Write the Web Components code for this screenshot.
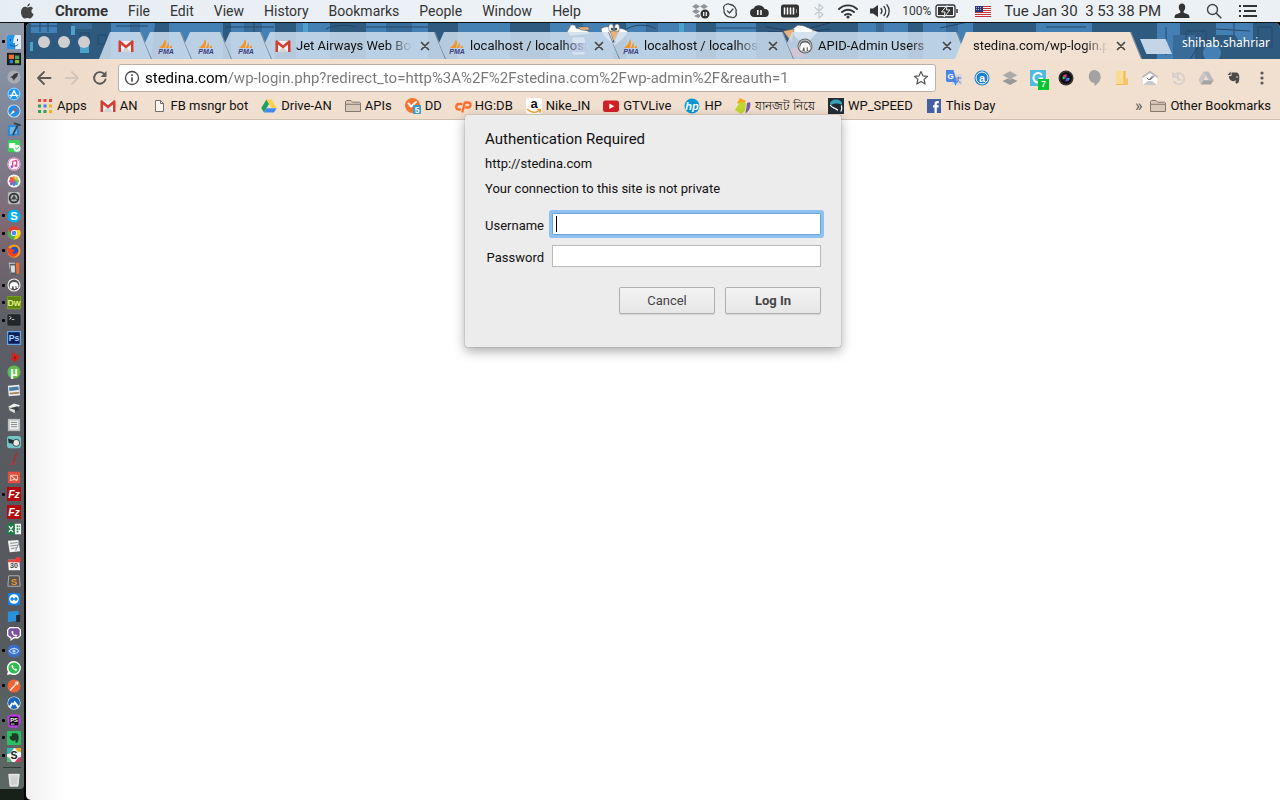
<!DOCTYPE html>
<html lang="en">
<head>
<meta charset="utf-8">
<title>stedina.com/wp-login.php</title>
<style>
  html, body { margin: 0; height: 100%; }
  body {
    font-family: Roboto, "Liberation Sans", sans-serif;
    font-size: 13px;
    line-height: 16px;
    color: #111;
    overflow: hidden;
  }
  [lang=bn] { font-size: 12px; }
</style>
</head>
<body>
<mac-desktop>
  <mac-menubar slot="menubar"></mac-menubar>
  <mac-dock slot="dock"></mac-dock>
  <browser-window>
    <browser-tab slot="tabs" pinned first icon="gmail"></browser-tab>
    <browser-tab slot="tabs" pinned icon="pma"></browser-tab>
    <browser-tab slot="tabs" pinned icon="pma"></browser-tab>
    <browser-tab slot="tabs" pinned icon="pma"></browser-tab>
    <browser-tab slot="tabs" icon="gmail">Jet Airways Web Booking</browser-tab>
    <browser-tab slot="tabs" icon="pma">localhost / localhost / db</browser-tab>
    <browser-tab slot="tabs" icon="pma">localhost / localhost / db</browser-tab>
    <browser-tab slot="tabs" icon="mamp">APID-Admin Users</browser-tab>
    <browser-tab slot="tabs" active>stedina.com/wp-login.php</browser-tab>
    <address-bar slot="toolbar"></address-bar>
    <bookmarks-bar slot="toolbar">
      <bookmark-item icon="apps">Apps</bookmark-item>
      <bookmark-item icon="gmail">AN</bookmark-item>
      <bookmark-item icon="page">FB msngr bot</bookmark-item>
      <bookmark-item icon="drive">Drive-AN</bookmark-item>
      <bookmark-item icon="folder">APIs</bookmark-item>
      <bookmark-item icon="dd">DD</bookmark-item>
      <bookmark-item icon="cpanel">HG:DB</bookmark-item>
      <bookmark-item icon="amazon">Nike_IN</bookmark-item>
      <bookmark-item icon="youtube">GTVLive</bookmark-item>
      <bookmark-item icon="hp">HP</bookmark-item>
      <bookmark-item icon="leaf" lang="bn">যানজট নিয়ে</bookmark-item>
      <bookmark-item icon="wpspeed">WP_SPEED</bookmark-item>
      <bookmark-item icon="facebook">This Day</bookmark-item>
      <bookmark-item slot="end" icon="folder">Other Bookmarks</bookmark-item>
    </bookmarks-bar>
    <auth-dialog>
      <span slot="title">Authentication Required</span>
      <span slot="origin">http://stedina.com</span>
      <span slot="message">Your connection to this site is not private</span>
    </auth-dialog>
  </browser-window>
</mac-desktop>

<script>
(function() {
  // Small builders for the icon set
  const box = (fill, inner = '') => `<rect x="1" y="1" width="14" height="14" rx="2" fill="${fill}"/>${inner}`;
  const disc = (fill, inner = '') => `<circle cx="8" cy="8" r="7.5" fill="${fill}"/>${inner}`;
  const line = (d, color = '#fff', width = 1.5) =>
    `<path d="${d}" fill="none" stroke="${color}" stroke-width="${width}" stroke-linecap="round" stroke-linejoin="round"/>`;
  const letters = (text, size, color, y = 12, extra = '') =>
    `<text x="8" y="${y}" font-size="${size}" font-weight="700" text-anchor="middle" fill="${color}" ${extra}>${text}</text>`;
  const phone = 'M5 5c0 3 3 6 6 6l.8-1.6-1.8-1-.8.8C8 8.800 7.200 8 6.800 6.800l.8-.8-1-1.800z';
  const evernoteHead = 'M5.500 2.500h5c2 .3 2.800 2 2.800 5 0 3-.6 6-2.300 6-2 0-2-2.500-.6-2.500-.6-1.200-2 .8-3.800 0C3.500 10.400 3 8 3 6h2.500z';

  // Every icon is drawn on a 16x16 grid unless it gives its own [width, markup]
  const ICONS = {
    // menu bar
    apple: '<path fill="#444" d="M11 .5c.1 1.500-1.300 3-2.700 3C8.100 2 9.500.7 11 .5zM8.300 4.500c.8 0 1.600-.8 3-.8 1.200 0 2.200.6 2.800 1.500-2.500 1.500-2.100 4.800.5 5.800-.6 1.700-2 4.500-3.600 4.500-1 0-1.500-.6-2.700-.6s-1.700.6-2.600.6C3.800 15.500 2 12 2 9c0-3.200 2-5.200 4-5.200 1.100 0 1.700.7 2.300.7z"/>',
    dropbox: [20, '<g fill="#8f9399"><path d="M5 1l4 2.500L5 6 1 3.500zM13 1l4 2.500L13 6 9 3.500zM5 6l4 2.500L5 11 1 8.500zM5 12l2-1.200 2 1.200v2l-2 1-4-2z"/></g><circle cx="14" cy="11" r="4.500" fill="#333"/><path d="M12.700 9v4M15.300 9v4" stroke="#fff" stroke-width="1.200"/>'],
    skypecheck: line('M4 1.500a3.500 3.500 0 0 1 4 0A6.500 6.500 0 0 1 14 9.500a3.500 3.500 0 0 1-5 4.500A6.500 6.500 0 0 1 2 6.500 3.500 3.500 0 0 1 4 1.500zM5.500 8l2 2 3.500-4', '#444', 1.300),
    cloud: [20, '<path fill="#333" d="M5 14a4.300 4.300 0 0 1-.5-8.500A6 6 0 0 1 15.500 6 4 4 0 0 1 16 14z"/><path d="M8.800 7v5M12 7v5" stroke="#fff" stroke-width="1.500"/>'],
    keybattery: [20, '<rect x="1" y="1.500" width="18" height="13" rx="2.500" fill="#333"/><path d="M4.500 4.500v7M7.500 4.500v7M10.500 4.500v7M13.500 4.500v7" stroke="#fff" stroke-width="1.500"/><path d="M16.500 6v4" stroke="#999"/>'],
    bluetooth: line('M4 4.500l8 7-4 3.500V1l4 3.500-8 7', '#c3c8cd', 1.100),
    wifi: [20, line('M1 6a13 13 0 0 1 18 0M4 9a9 9 0 0 1 12 0M7 12a5 5 0 0 1 6 0', '#333', 1.900) + '<circle cx="10" cy="14" r="1.500" fill="#333"/>'],
    volume: [22, '<path fill="#333" d="M1 5.500h3L9 2v12L4 10.500H1z"/>' + line('M12 5.500a4 4 0 0 1 0 5M15 3.500a7 7 0 0 1 0 9M18 1.800a10 10 0 0 1 0 12.400', '#333', 1.300)],
    battery: [24, '<rect x="1" y="2" width="19" height="12" rx="2" fill="none" stroke="#333" stroke-width="1.300"/><rect x="3" y="4" width="15" height="8" fill="#333"/><path d="M12 2.500L6.500 9h3.500l-1 5 6-7h-3.500z" fill="#333" stroke="#eef2f5"/><path d="M22 6v4" stroke="#333" stroke-width="1.500"/>'],
    flag: '<rect y="3" width="16" height="11" fill="#f5f5f5"/><path d="M0 3.500h16M0 5.500h16M0 7.500h16M0 9.500h16M0 11.500h16M0 13.500h16" stroke="#c8323c"/><rect y="3" width="8" height="6" fill="#2e3a78"/><path d="M1 4.500h6M1 6.500h6" stroke="#fff" stroke-width=".6" stroke-dasharray="1 1"/>',
    person: '<path fill="#333" d="M8 .5c2.300 0 3.300 1.800 3.200 3.800 0 1.700-.7 3-1.500 3.800v1.700l4 1.500c1.300.5 1.800 1.700 1.800 3.700H.5c0-2 .5-3.200 1.800-3.700l4-1.500V8.100C5.500 7.300 4.800 6 4.800 4.300 4.700 2.300 5.700.5 8 .5z"/>',
    search: '<circle cx="6.500" cy="6.500" r="5" fill="none" stroke="#444" stroke-width="1.400"/>' + line('M10.300 10.300l4.500 4.500', '#444', 1.600),
    list: [20, '<path d="M5 3h14M6 8h12M5 13h14" stroke="#333" stroke-width="1.800"/><path d="M1 3h2M1 8h2M1 13h2" stroke="#333" stroke-width="1.800"/>'],

    // page and bookmark icons
    gmail: '<path fill="#f3f3f3" d="M1 3h14v11H1z"/><path fill="#d5d5d5" d="M3 14l5-5 5 5z"/><path fill="#d63c30" d="M.5 3.500C.5 2.500 1.800 2 2.600 2.700L8 7.300l5.400-4.600c.8-.7 2.100-.2 2.100.8V14H13V6.500L8 10.500 3 6.500V14H.5z"/>',
    pma: '<path fill="#f7931e" d="M7 1c1.500 3 1.300 6-.3 9H1C4 8 6 5 7 1zM10 4c1.200 2 1.200 4 .3 6H7.500C9 8 10 6.500 10 4zM13 7c.8 1 1 2 1 3h-3c1-.8 1.700-1.800 2-3z"/>' + letters('PMA', 7, '#3f3f83', 15.500, 'font-style="italic"'),
    mamp: disc('#666', '<circle cx="8" cy="8" r="6" fill="none" stroke="#fff" stroke-width=".7"/><path fill="#fff" d="M3.500 12.500c-.8-4 0-8 4.500-8 4.800 0 5.500 4 4.800 7.500H11l-.3-3-1 .3V13H7.800L7.500 9.800 6 9.500l-.3 3z"/>'),
    apps: '<path fill="#e8453c" d="M1 1h3v3H1zM6.500 1h3v3h-3zM12 1h3v3h-3z"/><path fill="#30a05a" d="M1 6.500h3v3H1zM1 12h3v3H1zM6.500 12h3v3h-3z"/><path fill="#3f83f1" d="M6.500 6.500h3v3h-3z"/><path fill="#f5b400" d="M12 6.500h3v3h-3zM12 12h3v3h-3z"/>',
    page: '<path d="M4.500 2.500h5l3 3v8h-8z" fill="#fff5ec" stroke="#707070"/><path d="M9.500 2.500v3h3" fill="none" stroke="#707070"/>',
    drive: '<path fill="#1ea362" d="M5.500 1.500L8 6 3 14.500.2 10z"/><path fill="#ffcf48" d="M5.500 1.500h5l5.200 8.700h-5z"/><path fill="#4587f4" d="M5.500 10.200h10.200L13 14.500H3z"/>',
    folder: '<path d="M.5 13.500v-10l1-1h4.500l1.500 1.700h7l1 .8v8.500z" fill="#d8c9ba" stroke="#85786d"/><path d="M.5 6.300h15" stroke="#85786d"/>',
    dd: '<circle cx="7.500" cy="7.500" r="7.500" fill="#f4722b"/>' + line('M3.500 5.500l2.500 3 5-4.500', '#fff', 2) + '<rect x="8" y="7" width="8" height="9" rx="1" fill="#3b9ac9"/><text x="12" y="14.500" font-size="8.500" font-weight="700" text-anchor="middle" fill="#fff">5</text>',
    cpanel: line('M6.500 6H4a2.700 2.700 0 0 0 0 5.500h1M7.500 13.500L9.800 4.500H13a2.500 2.500 0 0 1 0 5h-2', '#ff6c2c', 2.300),
    amazon: '<rect width="16" height="16" rx="2" fill="#fff"/>' + letters('a', 13, '#111', 10) + line('M1.500 11.500c4 3.500 9 3.500 12.500.5M12 11.500l2.500.2-.5 2.500', '#f59b1c', 1.500),
    youtube: '<rect y="2.500" width="16" height="11.500" rx="2.500" fill="#cf2026"/><path fill="#fff" d="M6.300 5.500v5.500l5-2.700z"/>',
    hp: disc('#0b96d6') + letters('hp', 11, '#fff', 11.500, 'font-style="italic"'),
    leaf: '<path fill="#fba51a" d="M2 5L5 0l6 3-4 4z"/><path fill="#bfd730" d="M0 12L5 4l6 1-1 8-4 3z"/><path fill="#7a5ba8" d="M12 5l3-1c1 4 0 8-4.500 11.500z"/>',
    wpspeed: '<rect width="16" height="16" fill="#222d33"/><ellipse cx="8" cy="5.500" rx="6" ry="4" fill="#35a0b8"/><path fill="#222d33" d="M3 7c3-2 8-2 11 0v4H5z"/>' + line('M2.500 7.500c2 3 5 2 7 4.500M13 13c1-2 1-3 .5-5', '#fff', 1.300),
    facebook: '<rect x="1" y="1" width="14" height="14" fill="#4460a0"/><path fill="#fff" d="M8.500 15V9.500H7V7.300h1.500V6c0-2 1-3 2.800-3h1.500v2.200h-1c-.8 0-1 .4-1 1v1.100h2l-.3 2.200h-1.700V15z"/>',

    // toolbar
    back: line('M14.500 8H2M8 2L2 8l6 6', '#5a5a5a', 1.800),
    forward: line('M1.500 8H14M8 2l6 6-6 6', '#d3c6ba', 1.800),
    reload: line('M13.500 9.500A5.800 5.800 0 1 1 12 3.800', '#5a5a5a', 1.900) + '<path fill="#5a5a5a" d="M14.500 1v6h-6z"/>',
    info: '<circle cx="8" cy="8" r="6.500" fill="none" stroke="#444" stroke-width="1.300"/><path d="M8 7.300v4.400M8 4.300v1.600" stroke="#444" stroke-width="1.600"/>',
    star: line('M8 1.500l1.900 4.300 4.700.5-3.500 3.100 1 4.600L8 11.600 3.900 14l1-4.600L1.400 6.300l4.700-.5z', '#555', 1.200),
    translate: '<rect x="6" y="4" width="10" height="11" rx="1" fill="#d5d8de"/>' + line('M10 8h5M12.500 7v1c0 2-1 4-2 5M11 9.500l3.500 3.500', '#6c83a8', 1) + '<path fill="#4a86e8" d="M0 0h7.500L11 12l-1.500 4L8 12H1.500L0 11z"/><text x="4.700" y="9" font-size="8" font-weight="700" text-anchor="middle" fill="#fff">G</text>',
    alexa: disc('#1b7fd0', '<circle cx="8" cy="8" r="6" fill="none" stroke="#fff"/>') + letters('a', 11, '#fff', 11.500),
    buffer: '<path fill="#999" d="M8 7.500l7.500 3.500L8 15 .5 11z"/><path fill="#aaa" d="M8 1l7.500 4.200L8 9.500.5 5.200z" stroke="#f0e0d2" stroke-width=".4"/>',
    grammar: '<rect width="16" height="16" fill="#50bbdc"/>' + line('M11.500 4.500A4.700 4.700 0 1 0 12 10.500V8.500H9.500', '#fff', 2),
    camera: disc('#333', '<circle cx="8" cy="8" r="5.800" fill="#0c0c0c"/><circle cx="8" cy="8" r="3.500" fill="#24113d"/><path fill="#d33c72" d="M8 8L4.700 6A4 4 0 0 1 9 4.500z"/><path fill="#28c76b" d="M8 8l-3.500 1.500.2-3.500z"/><path fill="#24aadd" d="M8 8h3.800l-1 3z"/><path fill="#7b52cb" d="M8 8l2.500 3-3 .5z"/>'),
    hangouts: '<path fill="#a2a2a2" d="M8 0a6.700 6.700 0 0 1 6.700 6.700c0 4-3.200 7.300-6.200 9.300v-3A6.600 6.600 0 0 1 8 0z"/>',
    notes: '<path fill="#f0b95a" d="M2 1h9.500v14H2z"/><path fill="#f9dc93" d="M2 1h7.500v13H2z"/><path fill="#f3c469" d="M10 8.500h4V15h-4z"/>',
    mail: '<path fill="#fff" d="M1 6l7-5 7 5v9H1z"/><path fill="#b5b5b5" d="M.5 6L8 .8 15.500 6v2L8 3 .5 8z"/><path d="M1 15l5-4h4l5 4" fill="#c9c9c9"/>' + line('M5 8l2 2 3.500-4M8.500 9.500L12 6.500', '#666', 1),
    history: line('M3 3v4h4M3.500 7A5.500 5.500 0 1 1 4 11.500M8 5.500V9l2.500 1', '#d8d0cb', 2),
    drivegray: '<path fill="#c9c5c3" d="M5.500 1.500L8 6 3 14.500.2 10z"/><path fill="#bbb" d="M5.500 1.500h5l5.200 8.700h-5z"/><path fill="#a4a4a4" d="M5.500 10.200h10.200L13 14.500H3z"/>',
    evernote: `<path fill="#4a4a4a" d="${evernoteHead}"/><path fill="#4a4a4a" d="M1.500 5L4.700 1.500V5z"/><circle cx="11" cy="7" r=".8" fill="#eee"/>`,
    dots: '<g fill="#5a5a5a"><circle cx="8" cy="3" r="1.600"/><circle cx="8" cy="8" r="1.600"/><circle cx="8" cy="13" r="1.600"/></g>',
    close: line('M4.500 4.500l7 7M11.500 4.500l-7 7', '#444', 1.700),

    // dock
    finder: '<rect width="16" height="16" rx="1" fill="#e5eef6"/><path fill="#2196f0" d="M1 0h8c-1 3-2 6-2 9h2l.5 7H1a1 1 0 0 1-1-1V1z"/>' + line('M4 5v1.500M12 5v1.500M3.500 11c3 2.500 6.500 2.500 9 0', '#1b4d7f', 1.100),
    mission: '<rect y="1" width="16" height="14" fill="#171c1f"/><path fill="#eb6f35" d="M2 3h6v5H2z"/><path fill="#4aa564" d="M9 4h5v4H9z"/><path fill="#3779d0" d="M3 9h4v4H3z"/><path fill="#8bbd3c" d="M9 9h5v4H9z"/>',
    launchpad: disc('#a9adb3', '<path fill="#363a40" d="M12.500 3.500c-3 0-5 1-6.500 3.500L3.500 8l2 .8 1.500 1.700.8 2L9 10c2.500-1.500 3.500-3.500 3.500-6.500z"/>'),
    appstore: disc('#1d97f2') + '<circle cx="8" cy="8" r="6.800" fill="none" stroke="#bfe3ff"/>' + line('M8 4l-3.500 7.500M8 4l3.500 7.500M3.500 9.500h9', '#fff', 1.500),
    safari: disc('#e3eaf0', '<circle cx="8" cy="8" r="6.500" fill="#1f8ee6"/><path fill="#ef4b3e" d="M13 3L9 9 7 7z"/><path fill="#fff" d="M3 13l4-6 2 2z"/>'),
    xcode: '<path fill="#2a89d9" d="M1 4l12-1 1 12-13 1z"/><path fill="#6cb9f0" d="M3 6l8-.5.5 8-8 .5z"/>' + line('M12.500 3L7 14M8.500 1.500l6.500 2', '#34404c', 2),
    facetime: box('#3bd15a', '<rect x="2.500" y="4.500" width="7" height="6" rx="1" fill="#fff"/><circle cx="11.500" cy="10.500" r="4" fill="#f3fff4"/>' + line('M10 10l1 2 2.500-3', '#3bd15a', 1)),
    itunes: disc('#fafafa', '<circle cx="8" cy="8" r="6.800" fill="none" stroke="#ea5fae"/>' + line('M6.500 11V5l4.500-1v6', '#e04c8d', 1.500) + '<circle cx="5.500" cy="11" r="1.500" fill="#9d5be8"/><circle cx="10" cy="10" r="1.500" fill="#e04c8d"/>'),
    photos: disc('#f7f7f7', '<g stroke-width="3.500" stroke-linecap="round" fill="none"><path d="M8 7V4" stroke="#f5a623"/><path d="M9 7l2-2" stroke="#d9d13e"/><path d="M9 8h3" stroke="#7cc142"/><path d="M9 9l2 2" stroke="#3fb8a8"/><path d="M8 9v3" stroke="#4b87d0"/><path d="M7 9l-2 2" stroke="#9160bd"/><path d="M7 8H4" stroke="#d94f82"/><path d="M7 7L5 5" stroke="#ee5a3a"/></g>'),
    prefs: box('#b4b7ba', '<circle cx="8" cy="8" r="5" fill="none" stroke="#333" stroke-width="2"/><circle cx="8" cy="8" r="2" fill="#444"/><path d="M8 3v4M4 10l3-1.500M12 10L9 8.500" stroke="#333"/>'),
    skype: disc('#00aff0') + letters('S', 13, '#fff', 12.500),
    chrome: disc('#4caf50', '<path fill="#e33b2e" d="M1.500 4.200A7.500 7.500 0 0 1 14.700 4.500H8L5 9z"/><path fill="#fcd20b" d="M14.700 4.500A7.500 7.500 0 0 1 7.500 15.500L11.200 9 9 4.500z"/><circle cx="8" cy="8" r="3.500" fill="#fff"/><circle cx="8" cy="8" r="2.700" fill="#4285f4"/>'),
    firefox: disc('#ff9a16', '<circle cx="8.500" cy="7.500" r="4.500" fill="#2050c8"/><path fill="#f2411f" d="M1 4c2 1 4 1 5 2l3 1c-1 2-3 2-3 3 2 2 5 1 7-2 0 5-4 7-7 6.500C2 14 0 9 1 4z"/>'),
    calculator: '<path fill="#d6d6d6" d="M2 2h7v12l-5 1z"/><path fill="#5a5d61" d="M3 3h7l1 13H4z"/><path fill="#f36d2b" d="M10 2h4l0 12-3 1z"/><path fill="#ddd" d="M4 5h5v8H5z"/>',
    mampdock: disc('#f3f3f3', '<circle cx="8" cy="8" r="6.200" fill="#555"/><path fill="#fff" d="M3.500 12c-.8-4 0-7.500 4.500-7.500 4.800 0 5.500 4 4.800 7H11l-.3-2.500-1 .2V12.500H7.800L7.500 9.300 6 9l-.3 3z"/>'),
    dreamweaver: '<rect width="16" height="15" rx="1" fill="#7aa31b"/><rect x="1" y="1" width="14" height="13" fill="#3f5a0c" opacity=".45"/>' + letters('Dw', 10, '#e1f47c', 11.500),
    terminal: '<rect y="1" width="16" height="14" rx="2" fill="#22262a" stroke="#777" stroke-width=".7"/>' + line('M3 4l2 1.500L3 7M6 7.500h2', '#ddd', 1),
    photoshop: '<rect x=".7" y=".7" width="14.600" height="14.600" fill="#0b1d5b" stroke="#62a8e8" stroke-width="1.400"/>' + letters('Ps', 10, '#a7d8fb', 11.500),
    adobered: '<path fill="#d92019" d="M5 1c2 3 1 5 3 7l1-3c2 1 2 3 2 4l4-1c-1 3-2 3-3 6l-3 2c-2-2-4-4-5-3 1-2 2-2 2-4z"/><path fill="#701511" d="M8 9l2 1-1 5z"/>',
    utorrent: disc('#5ebf4d') + letters('µ', 15, '#fff', 12),
    preview: '<path fill="#e8edf0" d="M1 3l13-1 1 12-13 1z"/><path fill="#4b7ba5" d="M2 5l11-1 .5 4L3 9z"/><path fill="#a98558" d="M3 11l11-1 .5 2-11 1z"/>',
    graduate: '<path fill="#eee" d="M1 8l7-4 7 2-6 5z"/><path fill="#3e4043" d="M4 9l8-2 2 4-6 3-4-2z"/><path fill="#ddd" d="M2 9l7 2v4l-6-3z"/>',
    textbox: '<rect x="1" y="1" width="14" height="14" fill="#bdbfc1"/><rect x="3" y="3" width="10" height="10" fill="#f0f0f0"/><path d="M4.500 5h7M4.500 7.500h7M4.500 10h7" stroke="#777"/>',
    pencilface: '<rect y="1" width="16" height="14" rx="3" fill="#6fc6c3"/><circle cx="10.500" cy="9" r="4" fill="#e9e9e9" stroke="#333"/><path fill="#263033" d="M1 4l7 2-1 4-5-1z"/>',
    brush: line('M11 1.500L7 12', '#a4302f', 2) + line('M7 11l-3 3.500L11 13', '#b73936', 1),
    redcard: '<rect x="1" y="2" width="14" height="13" rx="1" fill="#e2513f"/>' + line('M4 6h8v5H7l-3 1zM4 6l7 6', '#ffc3b8', 1.200),
    filezilla: '<rect width="16" height="16" fill="#b30b0b"/>' + letters('Fz', 12, '#fff', 12.500, 'font-style="italic"'),
    excel: '<path fill="#fff" d="M8 2h8v12H8z"/><path fill="#1e7b45" d="M0 2l9-1.500v15L0 14zM11 4h2v2h-2zM14 4h1v2h-1zM11 7h2v2h-2zM14 7h1v2h-1zM11 10h2v2h-2z"/>' + line('M2.500 5l4 6M6.500 5l-4 6', '#fff', 1.400),
    textedit: '<path fill="#f1f1f1" d="M1 2l12-1 2 13-12 1z"/>' + line('M4 5l8-1M4 8l8-1M5 11l6-1M14 4l-4 9', '#7f858c', 1),
    calendar: '<path fill="#f4f4f4" d="M1 3l13 0 1 12H2z"/><path fill="#d94a41" d="M1 3h13v3H1z"/>' + letters('30', 8, '#444', 13) + '<circle cx="12.500" cy="3" r="3" fill="#f33"/>',
    sublime: '<path fill="#555" stroke="#b9b9b9" d="M2 2h12l1 12H1z"/>' + letters('S', 11, '#f49325', 12),
    teamviewer: box('#1482e6', '<circle cx="8" cy="8" r="5.500" fill="#fff"/>' + line('M4.500 8h7M6 6.500L4.500 8 6 9.500M10 6.500L11.500 8 10 9.500', '#1482e6', 1.500)),
    simulator: '<path fill="#2a91dc" d="M1 3l12-1 1 11-13 2z"/><path fill="#22292f" d="M10.500 7l4.500-.5v8l-4.500.5z"/>',
    viber: '<path fill="#fff" d="M3 0h10l3 3v7l-3 3H8l-4 3v-3l-4-3V3z"/><path fill="#7d51a0" d="M3.500 1.500h9l2 2v6l-2 2h-5l-2.500 2v-2l-3.500-2v-6z"/>' + `<path fill="#fff" d="${phone}"/>`,
    eye: disc('#3a6fc9') + line('M2.500 8C5 4 11 4 13.500 8 11 12 5 12 2.500 8z', '#b9d2ff', 1.200) + '<circle cx="8" cy="8" r="1.800" fill="#b9d2ff"/>',
    whatsapp: '<path fill="#fff" d="M8 0a8 8 0 1 1-4 15L0 16l1-4A8 8 0 0 1 8 0z"/><circle cx="8" cy="8" r="6.400" fill="#2bc04b"/>' + `<path fill="#fff" d="${phone}"/>`,
    postman: disc('#ef6436') + line('M4 12.500L11 5M10 4l2.500-.5L12 6', '#fbe5dd', 1.600),
    nordvpn: disc('#f4f7fb', '<circle cx="8" cy="8" r="6.800" fill="#1766c0"/><path fill="#fff" d="M2 12l3.500-5 1.500 1.500L8.500 5 14 12l-2 2-3-5-1 2-1.500-1.500L4 14z"/>'),
    phpstorm: '<path fill="#bc3ee0" d="M0 3l6-3 9 1 1 9-5 6-9-1z"/><rect x="3" y="3" width="10" height="10" fill="#111"/>' + letters('PS', 6.500, '#fff', 9.500) + '<path d="M4.500 11.500h4" stroke="#fff"/>',
    evernotegreen: `<rect width="16" height="16" rx="1" fill="#2dbe60"/><path fill="#1e3c29" d="${evernoteHead}"/>`,
    slack: '<rect width="16" height="16" rx="1" fill="#f7f7f7"/><path fill="#36b5ae" d="M0 0h8L4 6 0 7z"/><path fill="#e6a92f" d="M9 0h7v5l-4-1z"/><path fill="#d8375f" d="M16 10v6H9l4-5z"/><path fill="#5fb784" d="M0 10l3 1 3 5H0z"/>' + letters('S', 12, '#222', 12),
    trash: '<path fill="#d9dbdb" stroke="#f5f5f5" d="M2 1.500h12L12.500 15h-9z"/><path d="M5.500 4l.5 9M8 4v9M10.500 4l-.5 9" stroke="#bcc1c1"/>'
  };

  // Shared setup: open a shadow root and stamp the markup in it
  class UiElement extends HTMLElement {
    constructor() {
      super();
      this.attachShadow({ mode: 'open' });
    }
    stamp(html) {
      const template = document.createElement('template');
      template.innerHTML = html;
      this.shadowRoot.replaceChildren(template.content.cloneNode(true));
    }
  }

  class UiIcon extends UiElement {
    connectedCallback() {
      const icon = ICONS[this.getAttribute('name')] || '';
      const [width, markup] = Array.isArray(icon) ? icon : [16, icon];
      this.stamp(`
        <style>
          :host { display: block; flex: none; height: var(--icon-size, 16px); }
          svg { display: block; height: 100%; width: auto; overflow: visible; font-family: "Liberation Sans", sans-serif; }
        </style>
        <svg viewBox="0 0 ${width} 16" aria-hidden="true">${markup}</svg>`);
    }
  }

  class MacDesktop extends UiElement {
    connectedCallback() {
      this.stamp(`
        <style>
          :host {
            display: flex;
            flex-direction: column;
            height: 100vh;
            background: linear-gradient(90deg, transparent 24px, #050505 24px), linear-gradient(#8d9cab, #8d9cab 5%, #172019 90%);
          }
          main { display: flex; flex: 1; min-height: 0; border-top: 1px solid #111; }
          main ::slotted(browser-window) { flex: 1; min-width: 0; }
        </style>
        <slot name="menubar"></slot>
        <main><slot name="dock"></slot><slot></slot></main>`);
    }
  }

  class MacMenubar extends UiElement {
    connectedCallback() {
      const menus = ['File', 'Edit', 'View', 'History', 'Bookmarks', 'People', 'Window', 'Help'];
      const icons = names => names.map(name => `<ui-icon name="${name}"></ui-icon>`).join('');
      this.stamp(`
        <style>
          :host {
            display: flex;
            align-items: center;
            justify-content: space-between;
            height: 22px;
            padding: 0 22px 0 19px;
            background: linear-gradient(90deg, #e6edf4, #f0f4f7 60%, #ebf0f5);
            color: #333;
            font-size: 14px;
          }
          nav, div, span { display: flex; align-items: center; }
          nav { gap: 20px; }
          .status { gap: 11px; }
          .controls { gap: 16px; }
          span { gap: 4px; padding-right: 5px; font-size: 12px; }
          button { border: 0; padding: 0; background: none; color: inherit; font: inherit; }
          .app { font-weight: 700; font-size: 15px; }
          time { white-space: pre; padding: 0 2px; font-size: 15px; }
        </style>
        <nav>
          <ui-icon name="apple"></ui-icon>
          <button type="button" class="app">Chrome</button>
          ${menus.map(name => `<button type="button">${name}</button>`).join('')}
        </nav>
        <div class="status">
          ${icons(['dropbox', 'skypecheck', 'cloud', 'keybattery', 'bluetooth', 'wifi', 'volume'])}
          <span>100%<ui-icon name="battery"></ui-icon></span>
          <ui-icon name="flag"></ui-icon>
          <time>Tue Jan 30  3 53 38 PM</time>
          <div class="controls">${icons(['person', 'search', 'list'])}</div>
        </div>`);
    }
  }

  class MacDock extends UiElement {
    connectedCallback() {
      // A trailing dot marks an application that is running
      const apps = ('finder. mission launchpad appstore safari xcode facetime itunes photos prefs skype. chrome. ' +
        'firefox. calculator mampdock. dreamweaver. terminal. photoshop adobered utorrent preview graduate textbox ' +
        'pencilface brush redcard filezilla. filezilla excel textedit calendar sublime teamviewer simulator viber ' +
        'eye. whatsapp postman. nordvpn phpstorm. evernotegreen. slack.').split(' ');
      const item = app => `
        <li class="${app.endsWith('.') ? 'running' : ''}"><ui-icon name="${app.replace('.', '')}"></ui-icon></li>`;
      this.stamp(`
        <style>
          :host {
            --icon-size: 14px;
            display: flex;
            flex-direction: column;
            flex: none;
            width: 24px;
            margin: 9px 2px 11px 0;
            box-sizing: border-box;
            padding-top: 1px;
            border-radius: 0 4px 4px 0;
            background: linear-gradient(#8f99aa, #7d8596 12%, #7d6872 26%, #5d5f68 38%, #55575d 75%, #5c6864);
          }
          ul { display: flex; flex-direction: column; flex: 1; margin: 0; padding: 0; list-style: none; }
          li { display: flex; flex: 1; align-items: center; gap: 2px; padding-left: 2px; }
          li::before { content: ""; width: 3px; height: 3px; border-radius: 1px; }
          .running::before { background: #050505; }
          .rule { flex: none; width: 18px; height: 1px; margin: 3px; padding: 0; background: #333a3a; }
          .rule::before { content: none; }
          .trash { flex: none; height: 18px; }
        </style>
        <ul>
          ${apps.map(item).join('')}
          <li class="rule" role="separator"></li>
          <li class="trash"><ui-icon name="trash"></ui-icon></li>
        </ul>`);
    }
  }

  class BrowserWindow extends UiElement {
    connectedCallback() {
      this.stamp(`
        <style>
          :host {
            display: flex;
            flex-direction: column;
            border-radius: 5px 5px 0 5px;
            overflow: hidden;
            background: linear-gradient(90deg, #f0f0f0, #fff 40px);
          }
          header { position: relative; display: flex; height: 36px; background: #2f5a80; }
          .theme { position: absolute; width: 100%; height: 100%; }
          .lights { display: flex; gap: 8px; padding: 13px 9px 0 12px; position: relative; }
          .lights button { width: 12px; height: 12px; padding: 0; border: 0; border-radius: 50%; background: #cfcfcf; }
          .tabs { display: flex; flex: 1; align-items: flex-end; min-width: 0; position: relative; }
          .new-tab {
            flex: none;
            width: 32px; height: 15px; margin: 0 0 5px -2px; padding: 0; border: 0;
            background: #c4d6e6;
            clip-path: polygon(0 0, 80% 0, 100% 100%, 20% 100%);
          }
          .user { position: relative; padding: 12px 10px 0 0; color: #fff; font: 12px/16px "Noto Sans", sans-serif; }
          .toolbar {
            background: linear-gradient(90deg, #ecd9c8, #f1dfcf 8%);
            border-bottom: 1px solid #cfbfb1;
          }
          main { position: relative; flex: 1; }
          /* the dialog sheet hangs over the lower edge of the toolbar */
          main ::slotted(*) { position: absolute; top: -5px; left: 50%; translate: -50%; }
        </style>
        <header>
          <svg class="theme" viewBox="0 0 1254 36" preserveAspectRatio="xMinYMin slice" aria-hidden="true">
            <g fill="#4480b3">
              <path d="M5 0h26v10H5zM85 0h44l-4 36H85zM143 0h54v36h-54zM205 0h44v36h-44zM270 0h34v36h-34zM340 0h62v36h-62zM432 0h52v36h-52zM524 0h63v36h-63zM600 0h70v36h-70zM690 0h40v36h-40zM832 0h50v36h-50zM897 0h50v36h-50zM1010 0h56v36h-56z"/>
              <path d="M1131 0h23v36h-23zM1190 0h37v18h-14l-4-6h-19zM1154 16h12v14h-12z"/>
              <circle cx="1186" cy="30" r="9"/>
            </g>
            <path fill="#386b98" d="M46 0h20v6H46zM104 0h10v9h-10zM218 0h18v9h-18zM360 0h26v9h-26zM545 0h12v9h-12zM620 0h12v9h-12zM850 0h8v9h-8zM920 0h12v20h-12zM1147 12h22v24h-22z"/>
            <path fill="none" stroke="#24496b" d="M5 3h26M14 0v9M22 0v9M72 12h8v9h-8zM54 10h9v8h-9zM90 3h32M200 4h48M228 0v9M300 6c8-4 20-5 30-2M340 4h62M600 6c12-6 24-4 30 0M690 5h40M914 5l28-6M1020 4h40M1160 8h20v12h-20zM1190 6l34 2M1208 0v12M1232 4h14v20h-14zM1140 4v28M1172 24l-8 12"/>
            <path fill="#4ba3cb" d="M4 19h3v9H4zM54 22h9v8h-9zM45 3h4v9h-4zM277 0h5v9h-5zM653 0h5v9h-5z"/>
            <g stroke="#555" stroke-width=".5">
              <path fill="#fff" d="M544 4c0-3 6-3 6 1l12 3 2 3-20 2-3-4zM546 14h12l4 10-4 8h-12z"/>
              <path fill="#e8b27d" d="M552 4l11 0 0 3-8 0z"/>
              <path fill="#5c6fc4" stroke="none" d="M544 20h17v9h-17z"/>
              <path fill="#fff" d="M575 6c5-4 10-2 13 2 4-4 10-3 14 1-3 6-8 9-14 14-4-6-12-8-13-17z"/>
              <ellipse cx="585" cy="5" rx="2.500" ry="4" fill="#fff"/><ellipse cx="591" cy="5" rx="2.500" ry="4" fill="#fff"/>
              <path fill="#e8b27d" d="M584 8h9l-5 12z"/>
              <circle cx="588" cy="19" r="1.500" fill="#111"/><circle cx="586" cy="6" r="1" fill="#111"/><circle cx="590" cy="6" r="1" fill="#111"/>
              <path fill="#fff" d="M764 8l8-6 6 1 14 6-8 8h-12z"/>
              <path fill="#d33c52" stroke="none" d="M765 25h14v9h-14z"/>
              <path fill="#e8b27d" d="M757 8l11-2-2 14z"/>
              <path fill="none" stroke="#223" d="M740 4l20 3M742 9l16 0M784 5l20-5M786 8l18-2"/>
            </g>
          </svg>
          <div class="lights">
            <button type="button" aria-label="Close"></button>
            <button type="button" aria-label="Minimize"></button>
            <button type="button" aria-label="Zoom"></button>
          </div>
          <div class="tabs">
            <slot name="tabs"></slot>
            <button class="new-tab" type="button" aria-label="New tab"></button>
          </div>
          <div class="user">shihab.shahriar</div>
        </header>
        <div class="toolbar"><slot name="toolbar"></slot></div>
        <main><slot></slot></main>`);
    }
  }

  class BrowserTab extends UiElement {
    connectedCallback() {
      const icon = this.getAttribute('icon');
      const pinned = this.hasAttribute('pinned');
      this.stamp(`
        <style>
          :host {
            display: flex;
            align-items: center;
            flex: 0 1 187px;
            min-width: 0;
            box-sizing: border-box;
            position: relative;
            height: 27px;
            margin-left: -13px;
            padding: 0 13px 0 16px;
            gap: 5px;
          }
          :host([pinned]) { flex: 0 0 53px; padding: 0; justify-content: center; }
          :host([first]) { margin-left: 0; }
          .shape {
            position: absolute;
            inset: 0;
            background: rgba(206, 222, 237, .85);
            clip-path: polygon(11px 0, calc(100% - 11px) 0, 100% 100%, 13px 100%, 6px 11px);
          }
          :host([first]) .shape { clip-path: polygon(11px 0, calc(100% - 11px) 0, 100% 100%, 0 100%); }
          :host([active]) .shape {
            background: #f1e1d3;
            clip-path: polygon(11px 0, calc(100% - 11px) 0, 100% 100%, 0 100%);
          }
          .edge { position: absolute; right: 0; top: 0; width: 12px; height: 27px; }
          ui-icon, .title, button { position: relative; }
          .title {
            flex: 1;
            min-width: 0;
            overflow: hidden;
            white-space: nowrap;
            mask-image: linear-gradient(90deg, #000 calc(100% - 24px), transparent);
          }
          :host([active]) .title { padding-left: 2px; }
          button { padding: 0; border: 0; background: none; }
        </style>
        <div class="shape"></div>
        <svg class="edge" viewBox="0 0 12 27" aria-hidden="true"><path d="M.5 0l11 27" stroke="#5b7186" stroke-width=".8"/></svg>
        ${icon ? `<ui-icon name="${icon}"></ui-icon>` : ''}
        ${pinned ? '' : '<span class="title"><slot></slot></span><button type="button" aria-label="Close tab"><ui-icon name="close"></ui-icon></button>'}`);
    }
  }

  class AddressBar extends UiElement {
    connectedCallback() {
      const extensions = ['translate', 'alexa', 'buffer', 'grammar', 'camera', 'hangouts', 'notes', 'mail', 'history', 'drivegray', 'evernote', 'dots'];
      this.stamp(`
        <style>
          :host { display: flex; align-items: center; padding: 5px 4px 0; }
          button {
            position: relative;
            display: grid;
            place-items: center;
            flex: none;
            width: 28px;
            height: 28px;
            padding: 0;
            border: 0;
            background: none;
          }
          .field {
            display: flex;
            align-items: center;
            flex: 1;
            min-width: 0;
            box-sizing: border-box;
            height: 28px;
            margin: 0 4px;
            padding-left: 5px;
            border: 1px solid #bbb1a8;
            border-radius: 3px;
            background: #fff;
          }
          /* host name in black, the rest of the address in gray */
          input {
            flex: 1;
            min-width: 0;
            height: 24px;
            padding: 0 0 0 5px;
            border: 0;
            outline: 0;
            font: 15px/24px Roboto, sans-serif;
            color: #777;
            background: linear-gradient(90deg, #000 87px, #777 87px);
            background-clip: text;
            -webkit-text-fill-color: transparent;
          }
          .badge {
            position: absolute;
            right: 3px;
            bottom: 2px;
            padding: 0 3px;
            background: #00c72e;
            color: #fff;
            font: 700 9px/11px "Liberation Sans", sans-serif;
          }
        </style>
        <button type="button" aria-label="Back"><ui-icon name="back"></ui-icon></button>
        <button type="button" aria-label="Forward" disabled><ui-icon name="forward"></ui-icon></button>
        <button type="button" aria-label="Reload"><ui-icon name="reload"></ui-icon></button>
        <div class="field">
          <ui-icon name="info"></ui-icon>
          <input type="text" aria-label="Address" spellcheck="false"
            value="stedina.com/wp-login.php?redirect_to=http%3A%2F%2Fstedina.com%2Fwp-admin%2F&amp;reauth=1">
          <button type="button" aria-label="Bookmark this page"><ui-icon name="star"></ui-icon></button>
        </div>
        ${extensions.map(name => `<button type="button" aria-label="${name}"><ui-icon name="${name}"></ui-icon>${name === 'grammar' ? '<span class="badge">7</span>' : ''}</button>`).join('')}`);
    }
  }

  class BookmarksBar extends UiElement {
    connectedCallback() {
      this.stamp(`
        <style>
          :host { display: flex; justify-content: space-between; padding: 0 9px 0 11px; height: 27px; }
          div { display: flex; align-items: center; gap: 13px; }
          .end { gap: 8px; }
          button { padding: 0; border: 0; background: none; font: 16px/16px Roboto, sans-serif; color: #555; }
        </style>
        <div><slot></slot></div>
        <div class="end"><button type="button">»</button><slot name="end"></slot></div>`);
    }
  }

  class BookmarkItem extends UiElement {
    connectedCallback() {
      this.stamp(`
        <style>
          :host { display: block; white-space: nowrap; }
          a { display: flex; align-items: center; gap: 4px; color: #111; text-decoration: none; }
        </style>
        <a href="#"><ui-icon name="${this.getAttribute('icon')}"></ui-icon><slot></slot></a>`);
    }
  }

  class AuthDialog extends UiElement {
    connectedCallback() {
      this.stamp(`
        <style>
          :host {
            display: block;
            box-sizing: border-box;
            width: 376px;
            padding: 14px 20px 33px;
            background: #ececec;
            border-radius: 2px;
            box-shadow: 0 0 1px rgba(0, 0, 0, .6), 0 4px 12px rgba(0, 0, 0, .35);
          }
          h1 { margin: 0 0 6px; font-size: 15px; line-height: 20px; font-weight: 400; }
          p { margin: 0 0 7px; line-height: 18px; }
          form { display: grid; grid-template-columns: 59px 1fr; gap: 10px 8px; margin-top: 15px; align-items: center; }
          label { text-align: right; padding-top: 3px; }
          input {
            box-sizing: border-box;
            width: 100%;
            height: 22px;
            border: 1px solid #b9b9b9;
            outline: 0;
            background: #fff;
          }
          /* the field that has the focus, with its caret */
          #username {
            border-color: #6ea6db;
            border-radius: 1px;
            box-shadow: 0 0 0 3px #8fc1f0;
            background: linear-gradient(#000, #000) 3px 50% / 1px 16px no-repeat #fff;
          }
          footer { grid-column: 1 / -1; display: flex; justify-content: flex-end; gap: 10px; margin-top: 10px; }
          button {
            width: 96px;
            height: 27px;
            border: 1px solid #b0b0b0;
            border-radius: 2px;
            background: linear-gradient(#f3f3f3, #e6e6e6);
            box-shadow: 0 1px 1px rgba(0, 0, 0, .1);
            font: inherit;
            color: #444;
          }
          [type=submit] { font-weight: 700; }
        </style>
        <h1><slot name="title"></slot></h1>
        <p><slot name="origin"></slot></p>
        <p><slot name="message"></slot></p>
        <form>
          <label for="username">Username</label><input id="username" type="text">
          <label for="password">Password</label><input id="password" type="password">
          <footer><button type="button">Cancel</button><button type="submit">Log In</button></footer>
        </form>`);
      this.shadowRoot.querySelector('form').addEventListener('submit', event => event.preventDefault());
    }
  }

  window.customElements.define('ui-icon', UiIcon);
  window.customElements.define('mac-desktop', MacDesktop);
  window.customElements.define('mac-menubar', MacMenubar);
  window.customElements.define('mac-dock', MacDock);
  window.customElements.define('browser-window', BrowserWindow);
  window.customElements.define('browser-tab', BrowserTab);
  window.customElements.define('address-bar', AddressBar);
  window.customElements.define('bookmarks-bar', BookmarksBar);
  window.customElements.define('bookmark-item', BookmarkItem);
  window.customElements.define('auth-dialog', AuthDialog);
})();
</script>
</body>
</html>
